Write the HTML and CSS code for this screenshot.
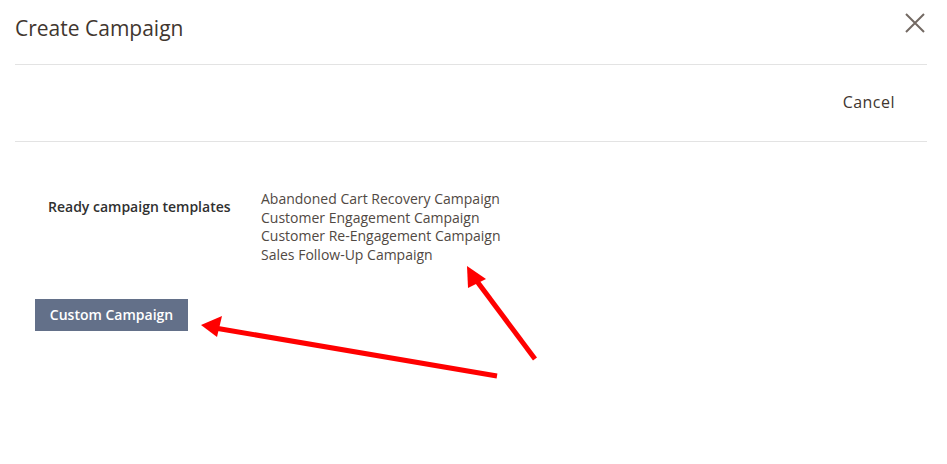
FILE: index.html
```html
<!DOCTYPE html>
<html lang="en">
<head>
  <meta charset="UTF-8">
  <title>Create Campaign</title>
  <link rel="stylesheet" href="styles.css">
</head>
<body>
  <div class="modal">
    <!-- Cabeçalho -->
    <header class="modal-header">
      <h1 class="modal-title">Create Campaign</h1>
      <button class="close-btn" aria-label="Close">
        <svg width="22" height="22" viewBox="0 0 22 22">
          <path d="M2 2 L20 20 M20 2 L2 20" stroke="#736963" stroke-width="2" fill="none"/>
        </svg>
      </button>
    </header>

    <!-- Ações -->
    <div class="toolbar">
      <button class="cancel-btn">Cancel</button>
    </div>

    <!-- Conteúdo -->
    <div class="modal-content">
      <div class="field">
        <span class="field-label">Ready campaign templates</span>
        <ul class="templates">
          <li>Abandoned Cart Recovery Campaign</li>
          <li>Customer Engagement Campaign</li>
          <li>Customer Re-Engagement Campaign</li>
          <li>Sales Follow-Up Campaign</li>
        </ul>
      </div>
      <button class="custom-btn">Custom Campaign</button>
    </div>
  </div>

  <!-- Setas de anotação -->
  <svg class="annotations" width="947" height="464" viewBox="0 0 947 464">
    <g stroke="#f00" stroke-width="5" fill="none" stroke-linecap="butt">
      <line x1="497" y1="376" x2="215" y2="328"/>
      <line x1="535" y1="359" x2="473" y2="276"/>
    </g>
    <g fill="#f00">
      <polygon points="201,325 222,316 217,337"/>
      <polygon points="467,266 486,279 468,288"/>
    </g>
  </svg>
</body>
</html>
```

FILE: styles.css
```css
/* Base */
body {
  margin: 0;
  font-family: "Open Sans", "Liberation Sans", sans-serif;
  background: #fff;
  color: #41362f;
}

.modal {
  padding: 0 20px 0 15px;
}

/* Cabeçalho */
.modal-header {
  display: flex;
  justify-content: space-between;
  align-items: flex-start;
  height: 64px;
  border-bottom: 1px solid #e3e3e3;
}

.modal-title {
  margin: 14px 0 0;
  font-size: 21px;
  font-weight: 400;
  line-height: 28px;
  color: #41362f;
}

.close-btn {
  border: none;
  background: none;
  padding: 0;
  margin: 12px 1px 0 0;
  cursor: pointer;
  width: 22px;
  height: 22px;
}

/* Ações */
.toolbar {
  display: flex;
  justify-content: flex-end;
  align-items: center;
  height: 76px;
  border-bottom: 1px solid #e3e3e3;
}

.cancel-btn {
  border: none;
  background: none;
  font-family: inherit;
  font-size: 16px;
  letter-spacing: 0.03em;
  color: #41362f;
  padding: 0;
  margin: 0 32px 3px 0;
  cursor: pointer;
}

/* Conteúdo */
.modal-content {
  padding: 48px 0 0 20px;
}

.field {
  display: flex;
  align-items: flex-start;
  padding-left: 13px;
}

.field-label {
  width: 213px;
  padding-top: 7px;
  font-size: 14px;
  font-weight: 600;
  line-height: 19px;
  color: #303030;
}

.templates {
  list-style: none;
  margin: 0;
  padding: 0;
  font-size: 14px;
  line-height: 18.7px;
  color: #514943;
}

.custom-btn {
  margin-top: 34px;
  width: 153px;
  height: 32px;
  border: none;
  background: #637089;
  color: #fff;
  font-family: inherit;
  font-size: 14px;
  font-weight: 600;
  cursor: pointer;
}

/* Setas */
.annotations {
  position: absolute;
  top: 0;
  left: 0;
  pointer-events: none;
}
```
